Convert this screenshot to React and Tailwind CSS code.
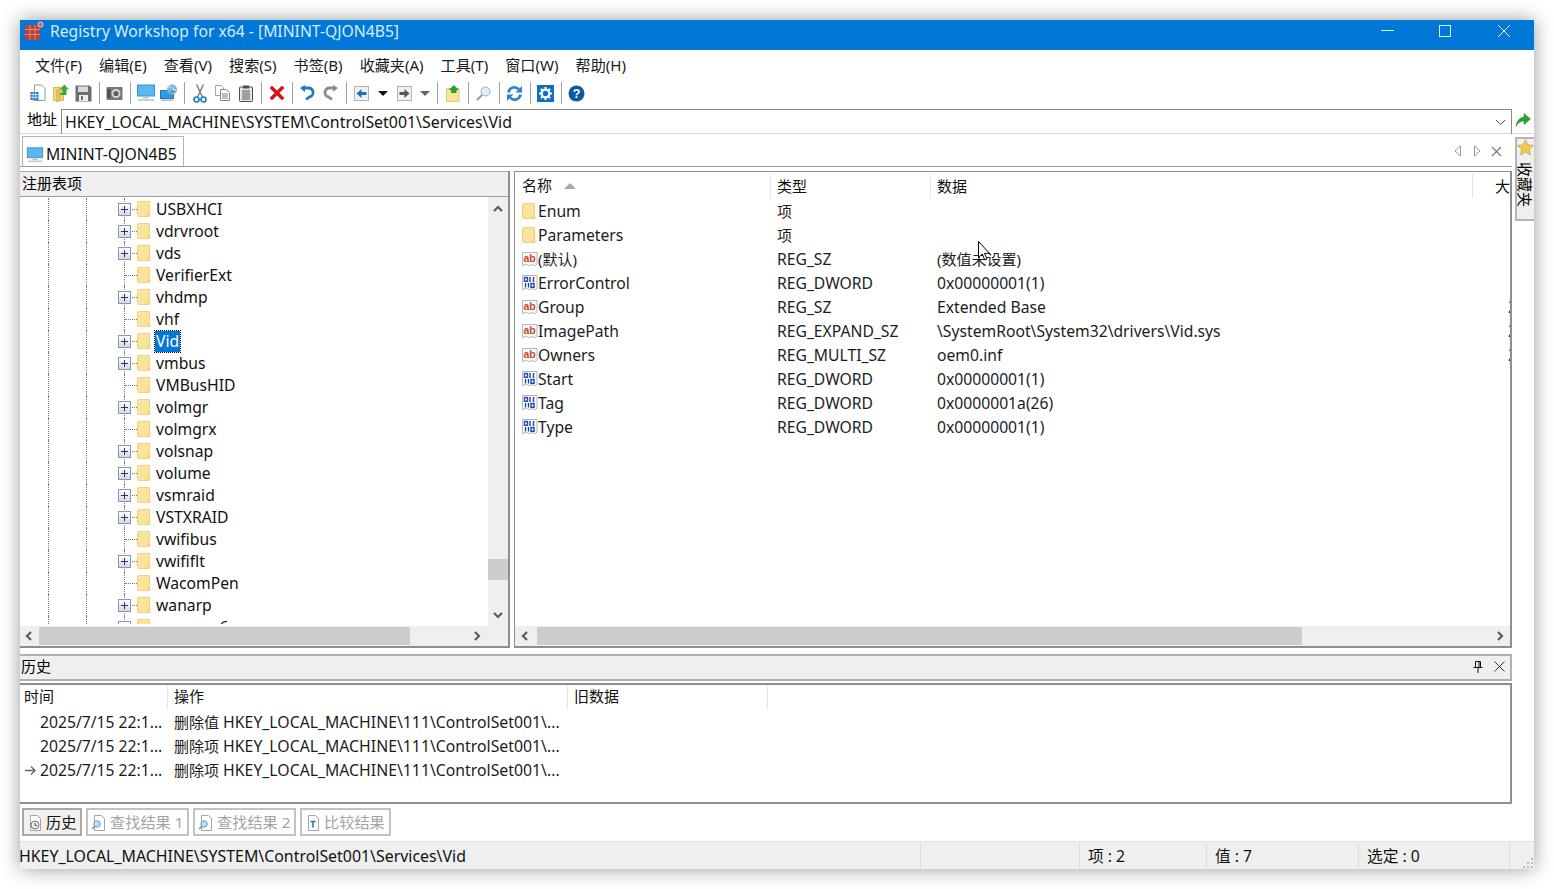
import React from "react";

const treeRows = [
  ["USBXHCI", true],
  ["vdrvroot", true],
  ["vds", true],
  ["VerifierExt", false],
  ["vhdmp", true],
  ["vhf", false],
  ["Vid", true, true],
  ["vmbus", true],
  ["VMBusHID", false],
  ["volmgr", true],
  ["volmgrx", false],
  ["volsnap", true],
  ["volume", true],
  ["vsmraid", true],
  ["VSTXRAID", true],
  ["vwifibus", false],
  ["vwififlt", true],
  ["WacomPen", false],
  ["wanarp", true],
  ["wanarpv6", true],
];

const valueRows = [
  ["folder", "Enum", "项", ""],
  ["folder", "Parameters", "项", ""],
  ["ab", "(默认)", "REG_SZ", "(数值未设置)"],
  ["bin", "ErrorControl", "REG_DWORD", "0x00000001(1)"],
  ["ab", "Group", "REG_SZ", "Extended Base", "2"],
  ["ab", "ImagePath", "REG_EXPAND_SZ", "\\SystemRoot\\System32\\drivers\\Vid.sys", "2"],
  ["ab", "Owners", "REG_MULTI_SZ", "oem0.inf", "2"],
  ["bin", "Start", "REG_DWORD", "0x00000001(1)"],
  ["bin", "Tag", "REG_DWORD", "0x0000001a(26)"],
  ["bin", "Type", "REG_DWORD", "0x00000001(1)"],
];

const historyRows = [
  ["2025/7/15 22:1...", "删除值", false],
  ["2025/7/15 22:1...", "删除项", false],
  ["2025/7/15 22:1...", "删除项", true],
];

// chinese labels sit a bit smaller than the latin text next to them
const cjk = (s) => (/[\u4e00-\u9fff]/.test(s) ? "text-[15px]" : "pt-[2px]");

const Folder = () => (
  <svg width="14" height="17" viewBox="0 0 14 17" className="shrink-0">
    <path d="M.5 1.5a1 1 0 0 1 1-1h11v15h-11a1 1 0 0 1-1-1z" fill="#fbe39a" stroke="#f0d27c" />
    <path d="M10.5 11.5h3v4h-3z" fill="#f5d785" />
  </svg>
);

const AbIcon = () => (
  <svg width="16" height="16" viewBox="0 0 16 16" className="shrink-0">
    <path d="M.5 1.5h14.500v11.500l-1.500 1.500-3-1-3 1-3-1-4 1z" fill="#fff" stroke="#b4b4b4" />
    <text x="1.500" y="10.500" fontSize="10.500" fontWeight="700" fontFamily="Liberation Sans" fill="#c8452a">ab</text>
  </svg>
);

const BinIcon = () => (
  <svg width="16" height="16" viewBox="0 0 16 16" className="shrink-0">
    <path d="M.5 .5h14.500v12.500l-1.500 1.500-3-1-3 1-3-1-4 1z" fill="#fff" stroke="#b4b4b4" />
    <g fill="none" stroke="#1a46a8" strokeWidth="1.400">
      <rect x="2.500" y="2.500" width="3" height="3.800" />
      <path d="M8 2v5M11.500 2v5" />
      <path d="M3.500 8v4.500M6.500 8v4.500" />
      <rect x="9" y="8.500" width="3" height="3.800" />
    </g>
  </svg>
);

const Monitor = ({ size = 20 }) => (
  <svg width={size} height={size} viewBox="0 0 20 20">
    <rect x="1.500" y="2" width="17" height="11" fill="#5cb8ec" stroke="#3a93cd" />
    <path d="M7 14h6v1.500H7z" fill="#b9c4cc" />
    <path d="M2 16h16v2H2z" fill="#c5d0d8" />
  </svg>
);

const Tool = ({ children }) => (
  <button className="w-[23px] h-[24px] flex items-center justify-center shrink-0">{children}</button>
);

const Sep = () => (
  <div className="w-[8px] h-[22px] flex justify-center shrink-0">
    <div className="w-px h-full bg-[#a0a0a0]" />
  </div>
);

const Caret = ({ w, color = "#111" }) => (
  <div className="h-[24px] flex items-center justify-center shrink-0" style={{ width: w }}>
    <div
      className="w-0 h-0 border-x-[5px] border-x-transparent border-t-[5px]"
      style={{ borderTopColor: color }}
    />
  </div>
);

function Toolbar() {
  return (
    <div className="h-[28px] flex items-center pl-[6px] pb-[2px] shrink-0">
      <Tool>
        <svg width="16" height="18" viewBox="0 0 16 18">
          <path d="M4.500 1h7l3.500 3.500V16.500h-11z" fill="#fff" stroke="#8d98a0" />
          <path d="M.5 8h8v8h-8z" fill="#1a78cc" />
          <path d="M1 10.500h7M1 13.300h7M3.200 8.500v7M5.800 8.500v7" stroke="#d2e8f8" strokeWidth=".9" />
        </svg>
      </Tool>
      <Tool>
        <svg width="18" height="19" viewBox="0 0 18 19">
          <path d="M1.500 3.500h10v13h-10z" fill="#f5d67f" stroke="#d8b65f" />
          <path d="M4 5.500l5-2v13.500L4 18.500z" fill="#e5bb5d" />
          <path d="M8 9h2.500V5.500H8l4.300-5L17 5.500h-2.500v5.500H8z" fill="#39a83a" />
        </svg>
      </Tool>
      <Tool>
        <svg width="17" height="17" viewBox="0 0 17 17">
          <path d="M.5.500h14l2 2v14H.5z" fill="#6e6e6e" />
          <path d="M3 1.500h10V7H3z" fill="#d9d9d9" />
          <path d="M4 10h9v6H4z" fill="#ededed" />
          <path d="M6 11h2v4H6z" fill="#6e6e6e" />
        </svg>
      </Tool>
      <Sep />
      <Tool>
        <svg width="17" height="15" viewBox="0 0 17 15">
          <rect x=".500" y="1" width="16" height="13" rx="1" fill="#77787a" />
          <rect x="1" y="3" width="3.500" height="9" fill="#4f5052" />
          <circle cx="10" cy="7.500" r="4.500" fill="#d8d8d8" />
          <circle cx="10" cy="7.500" r="2.600" fill="#4e6366" />
        </svg>
      </Tool>
      <Sep />
      <Tool>
        <Monitor />
      </Tool>
      <Tool>
        <svg width="18" height="18" viewBox="0 0 18 18">
          <rect x=".500" y="6.500" width="13" height="8" fill="#2f9be0" stroke="#2078b5" />
          <path d="M1 15.500h12v1.500H1z" fill="#aeb9c2" />
          <circle cx="12" cy="5.500" r="5" fill="#7fb4dc" />
          <path d="M8 3.500c2-2 4 0 5 1.500s3 .5 3 .5" stroke="#e9f3fa" fill="none" />
          <path d="M10 9c1-2 3-2 5-1" stroke="#3878ab" fill="none" />
        </svg>
      </Tool>
      <Sep />
      <Tool>
        <svg width="14" height="19" viewBox="0 0 14 19">
          <path d="M3.500 .500l6 12.500M10.500 .500L4.500 13" stroke="#7e7e7e" strokeWidth="1.500" />
          <circle cx="3.500" cy="15.500" r="2.500" fill="#fff" stroke="#1e7cc4" strokeWidth="1.700" />
          <circle cx="10.500" cy="15.500" r="2.500" fill="#fff" stroke="#1e7cc4" strokeWidth="1.700" />
        </svg>
      </Tool>
      <Tool>
        <svg width="15" height="16" viewBox="0 0 15 16">
          <path d="M.500.500h6l2 2v8h-8z" fill="#fff" stroke="#a4a4a4" />
          <path d="M5.500 4.500h6l3 3v8h-9z" fill="#fff" stroke="#8a8a8a" />
          <path d="M7 9h6M7 11h6M7 13h6" stroke="#4a8fc4" />
        </svg>
      </Tool>
      <Tool>
        <svg width="14" height="17" viewBox="0 0 14 17">
          <rect x=".500" y="2" width="13" height="14.500" rx="1" fill="#e6e6e6" stroke="#4c4c4c" />
          <rect x="4" y=".500" width="6" height="3" fill="#4c4c4c" />
          <path d="M3 6h8M3 8h8M3 10h8M3 12h8M3 14h8" stroke="#5a5a5a" />
        </svg>
      </Tool>
      <Sep />
      <Tool>
        <svg width="14" height="14" viewBox="0 0 14 14">
          <path d="M2 2l10 10M12 2L2 12" stroke="#d7141a" strokeWidth="3.400" strokeLinecap="square" />
        </svg>
      </Tool>
      <Sep />
      <Tool>
        <svg width="15" height="16" viewBox="0 0 15 16">
          <path d="M3 3h5.500a4.500 4.500 0 0 1 1 8.900L6 14.500" fill="none" stroke="#1e78c6" strokeWidth="2.800" />
          <path d="M0 3l5-3v7z" fill="#1e78c6" />
        </svg>
      </Tool>
      <Tool>
        <svg width="15" height="16" viewBox="0 0 15 16">
          <path d="M12 3H6.500a4.500 4.500 0 0 0-1 8.900L9 14.500" fill="none" stroke="#8b8b8b" strokeWidth="2.800" />
          <path d="M15 3l-5-3v7z" fill="#8b8b8b" />
        </svg>
      </Tool>
      <Sep />
      <Tool>
        <svg width="15" height="15" viewBox="0 0 15 15">
          <rect x=".500" y=".500" width="14" height="14" fill="#f0f0f0" stroke="#b4b4b4" />
          <path d="M2.500 7.500L7.500 3v3h5v3h-5v3z" fill="#1e6fc0" />
        </svg>
      </Tool>
      <Caret w={20} />
      <Tool>
        <svg width="15" height="15" viewBox="0 0 15 15">
          <rect x=".500" y=".500" width="14" height="14" fill="#f0f0f0" stroke="#b4b4b4" />
          <path d="M12.500 7.500L7.500 3v3h-5v3h5v3z" fill="#555" />
        </svg>
      </Tool>
      <Caret w={17} color="#666" />
      <Sep />
      <Tool>
        <svg width="14" height="17" viewBox="0 0 14 17">
          <path d="M.500 3.500h12.500v13H.500z" fill="#fbe39a" stroke="#e5c76f" />
          <path d="M5 8V5H2.500L8 0l5 5h-2.500v3z" fill="#27a32c" />
        </svg>
      </Tool>
      <Sep />
      <Tool>
        <svg width="15" height="15" viewBox="0 0 15 15">
          <circle cx="9.500" cy="5.500" r="4.500" fill="#e3eef6" stroke="#8fb0c8" />
          <path d="M6 9l-5 5" stroke="#9a9a9a" strokeWidth="2" />
        </svg>
      </Tool>
      <Sep />
      <Tool>
        <svg width="15" height="15" viewBox="0 0 15 15">
          <path d="M1.500 6.500A6 6 0 0 1 12 3.500" fill="none" stroke="#2b83cf" strokeWidth="2.600" />
          <path d="M15 0v6.500H8.500z" fill="#2b83cf" />
          <path d="M13.500 8.500A6 6 0 0 1 3 11.500" fill="none" stroke="#2b83cf" strokeWidth="2.600" />
          <path d="M0 15V8.500h6.500z" fill="#2b83cf" />
        </svg>
      </Tool>
      <Sep />
      <Tool>
        <svg width="17" height="17" viewBox="0 0 17 17">
          <rect width="17" height="17" fill="#0f6fc6" />
          <circle cx="8.500" cy="8.500" r="3.800" fill="none" stroke="#fff" strokeWidth="2.200" />
          <path d="M8.500 2v2.500M8.500 12.500V15M2 8.500h2.500M12.500 8.500H15M3.900 3.900l1.800 1.800M11.300 11.300l1.800 1.800M13.100 3.900l-1.800 1.800M5.700 11.300l-1.800 1.800" stroke="#fff" strokeWidth="2" />
        </svg>
      </Tool>
      <Sep />
      <Tool>
        <svg width="17" height="17" viewBox="0 0 17 17">
          <circle cx="8.500" cy="8.500" r="8" fill="#0b5aa5" />
          <text x="8.500" y="13" textAnchor="middle" fontSize="12.500" fontWeight="700" fontFamily="Liberation Sans" fill="#fff">?</text>
        </svg>
      </Tool>
    </div>
  );
}

const Guide = ({ w }) => (
  <div className="h-full border-r border-dotted border-r-[#777] shrink-0" style={{ width: w }} />
);

function TreeRow({ name, expandable, selected }) {
  return (
    <div className="flex h-[22px] items-center">
      <Guide w={29} />
      <Guide w={38} />
      <div className="relative w-[38px] h-full border-r border-dotted border-r-[#777] shrink-0">
        {expandable && (
          <div className="absolute right-[-7px] top-[5px] w-[13px] h-[13px] border border-[#8a97a8] bg-gradient-to-b from-white to-[#d5d9e2] flex items-center justify-center">
            <div className="relative w-[7px] h-[7px]">
              <div className="absolute left-0 top-[3px] w-[7px] h-px bg-[#1f3a68]" />
              <div className="absolute left-[3px] top-0 w-px h-[7px] bg-[#1f3a68]" />
            </div>
          </div>
        )}
      </div>
      <div className="w-[12px] border-t border-dotted border-t-[#777] shrink-0" />
      <Folder />
      <span
        className={
          selected
            ? "ml-[4px] px-px h-[21px] leading-[20px] text-white bg-[#0078d7] outline-1 outline-dotted outline-black"
            : "ml-[5px] pt-[2px] text-[#111]"
        }
      >
        {name}
      </span>
    </div>
  );
}

const Chevron = ({ d }) => (
  <svg width="12" height="12" viewBox="0 0 12 12">
    <path d={d} fill="none" stroke="#5c5c5c" strokeWidth="2.200" />
  </svg>
);

function HScroll({ left, thumb, after }) {
  return (
    <div className="h-[20px] flex items-stretch bg-[#efefef] shrink-0">
      <div className="flex items-center justify-center pr-[2px] shrink-0" style={{ width: left }}>
        <Chevron d="M8 2L4 6l4 4" />
      </div>
      <div className="bg-[#cdcdcd] my-px shrink-0" style={{ width: thumb }} />
      <div className="flex-1" />
      <div className="flex items-center justify-center shrink-0" style={{ width: after }}>
        <Chevron d="M4 2l4 4-4 4" />
      </div>
    </div>
  );
}

function TreePane() {
  return (
    <div className="w-[490px] shrink-0 h-full border-r-2 border-b-2 border-[#8e8e8e] flex flex-col">
      <div className="h-[26px] bg-[#efefef] border-t border-[#a8a8a8] border-b border-b-[#a0a0a0] pl-[2px] leading-[23px] text-[15px] shrink-0">注册表项</div>
      <div className="flex-1 flex min-h-0">
        <div className="flex-1 overflow-hidden pt-px mb-[2px]">
          {treeRows.map(([name, expandable, selected]) => (
            <TreeRow key={name} name={name} expandable={expandable} selected={selected} />
          ))}
        </div>
        <div className="w-[20px] flex flex-col bg-[#efefef] shrink-0">
          <div className="h-[24px] flex items-center justify-center shrink-0">
            <Chevron d="M2 8l4-4 4 4" />
          </div>
          <div className="h-[338px] shrink-0" />
          <div className="h-[21px] bg-[#cdcdcd] shrink-0" />
          <div className="flex-1 flex items-end justify-center pb-[5px]">
            <Chevron d="M2 4l4 4 4-4" />
          </div>
        </div>
      </div>
      <div className="pr-[20px] bg-[#efefef] shrink-0">
        <HScroll left={19} thumb={371} after={23} />
      </div>
    </div>
  );
}

function ValuesPane() {
  return (
    <div className="flex-1 min-w-0 h-full border border-b-2 border-r-2 border-[#8e8e8e] flex flex-col">
      <div className="h-[27px] flex items-center shrink-0 text-[#111] text-[15px]">
        <div className="w-[256px] pl-[7px] flex items-center gap-[12px] h-[24px] border-r border-[#e5e5e5] shrink-0">
          名称
          <div className="w-0 h-0 border-x-[6px] border-x-transparent border-b-[6px] border-b-[#a8a8a8]" />
        </div>
        <div className="w-[160px] pl-[6px] h-[24px] leading-[24px] border-r border-[#e5e5e5] shrink-0">类型</div>
        <div className="w-[542px] pl-[6px] h-[24px] leading-[24px] border-r border-[#e5e5e5] shrink-0">数据</div>
        <div className="flex-1 pl-[22px] h-[24px] leading-[24px] overflow-hidden whitespace-nowrap">大小</div>
      </div>
      <div className="flex-1 min-h-0 overflow-hidden">
        {valueRows.map(([kind, name, type, data, size]) => (
          <div key={name} className="h-[24px] flex items-center text-[#1c1c1c]">
            <div className="w-[256px] pl-[7px] flex items-center shrink-0">
              <div className="w-[16px] flex items-center justify-start shrink-0">
                {kind === "folder" ? <Folder /> : kind === "ab" ? <AbIcon /> : <BinIcon />}
              </div>
              <span className={cjk(name)}>{name}</span>
            </div>
            <div className={`w-[160px] pl-[6px] shrink-0 ${cjk(type)}`}>{type}</div>
            <div className={`w-[577px] pl-[6px] shrink-0 whitespace-nowrap ${cjk(data)}`}>{data}</div>
            <div className="flex-1 overflow-hidden pt-[2px]">{size}</div>
          </div>
        ))}
      </div>
      <HScroll left={22} thumb={765} after={20} />
    </div>
  );
}

function HistoryPane() {
  return (
    <div className="h-[121px] mt-[2px] border-y-2 border-r-2 border-[#8e8e8e] flex flex-col shrink-0">
      <div className="h-[25px] flex items-start text-[#111] text-[15px] shrink-0">
        <div className="w-[148px] pl-[4px] h-[24px] leading-[22px] border-r border-[#e5e5e5] shrink-0">时间</div>
        <div className="w-[400px] pl-[6px] h-[24px] leading-[22px] border-r border-[#e5e5e5] shrink-0">操作</div>
        <div className="w-[200px] pl-[6px] h-[24px] leading-[22px] border-r border-[#e5e5e5] shrink-0">旧数据</div>
      </div>
      {historyRows.map(([time, op, current], i) => (
        <div key={i} className="h-[24px] flex items-center text-[#1c1c1c]">
          <div className="w-[20px] flex justify-end pr-[3px] shrink-0">
            {current && (
              <svg width="13" height="11" viewBox="0 0 13 11">
                <path d="M1 5.500h10M7 1.500l4 4-4 4" fill="none" stroke="#666" strokeWidth="1.400" />
              </svg>
            )}
          </div>
          <div className="w-[134px] pt-[2px] shrink-0 whitespace-nowrap">{time}</div>
          <div className="pt-[2px] whitespace-nowrap text-[15.8px]">
            <span className="text-[15px]">{op}</span> HKEY_LOCAL_MACHINE\111\ControlSet001\...
          </div>
        </div>
      ))}
    </div>
  );
}

const PageIcon = ({ children }) => (
  <svg width="16" height="17" viewBox="0 0 16 17" className="shrink-0">
    <path d="M3.500 1.500h7l3 3v12h-10z" fill="#fff" stroke="#a5a5a5" />
    {children}
  </svg>
);

function BottomTab({ w, active, icon, children }) {
  return (
    <div
      className={`h-[28px] border-2 flex items-center pl-[3px] gap-[3px] text-[15.2px] shrink-0 ${
        active ? "bg-[#f0f0f0] text-[#111] border-[#a8a8a8]" : "bg-white text-[#a3a3a3] border-[#c2c2c2]"
      }`}
      style={{ width: w }}
    >
      {icon}
      <span className="whitespace-nowrap">{children}</span>
    </div>
  );
}

const Search = (
  <PageIcon>
    <circle cx="6" cy="10" r="3.200" fill="#bfe0f3" stroke="#5b9bc4" />
    <path d="M3.500 12.500L1 15" stroke="#7a8f9c" strokeWidth="1.500" />
  </PageIcon>
);

export default function App() {
  return (
    <div className="w-[1554px] h-[889px] p-[20px] bg-white overflow-hidden font-['Noto_Sans','Noto_Sans_CJK_SC',sans-serif] text-[15.7px]">
      <div className="relative w-[1514px] h-[849px] flex flex-col bg-white shadow-[0_0_18px_rgba(0,0,0,0.4)]">
        {/* title bar */}
        <div className="h-[30px] pb-[8px] bg-[#0078d7] flex items-center text-[#d8ebfa] shrink-0">
          <svg width="20" height="20" viewBox="0 0 20 20" className="ml-[4px] shrink-0">
            <path d="M1 4h15v15H1z" fill="#bd4038" />
            <path d="M1 8.500h15M1 13.500h15M6 4v15M11 4v15" stroke="#e29a90" strokeWidth=".8" />
            <circle cx="16.500" cy="3.500" r="2.500" fill="#e44a4a" stroke="#fff" strokeWidth=".8" />
          </svg>
          <span className="ml-[6px] pt-[2px]">Registry Workshop for x64 - [MININT-QJON4B5]</span>
          <div className="ml-auto flex items-center h-full">
            <div className="w-[58px] flex justify-center">
              <svg width="13" height="12" viewBox="0 0 13 12"><path d="M0 5.500h13" stroke="#e8f3fc" /></svg>
            </div>
            <div className="w-[58px] flex justify-center">
              <svg width="12" height="12" viewBox="0 0 12 12"><rect x=".500" y=".500" width="11" height="11" fill="none" stroke="#e8f3fc" /></svg>
            </div>
            <div className="w-[60px] pr-[1px] flex justify-center">
              <svg width="12" height="12" viewBox="0 0 12 12"><path d="M0 0l12 12M12 0L0 12" stroke="#e8f3fc" /></svg>
            </div>
          </div>
        </div>

        {/* menu */}
        <div className="h-[30px] pl-[15px] flex items-center gap-[17px] text-[15.1px] text-[#1a1a1a] shrink-0">
          {["文件(F)", "编辑(E)", "查看(V)", "搜索(S)", "书签(B)", "收藏夹(A)", "工具(T)", "窗口(W)", "帮助(H)"].map((m) => (
            <span key={m}>{m}</span>
          ))}
        </div>

        <Toolbar />

        {/* address bar */}
        <div className="h-[26px] flex items-start border-b border-[#d8d8d8] shrink-0">
          <div className="w-[41px] pl-[7px] pt-px leading-[21px] text-[15px] shrink-0">地址</div>
          <div className="flex-1 h-[25px] border-t border-x border-[#8a8a8a] flex items-center pl-[3px] text-[15.9px] text-[#111] mt-[1px]">
            <span className="pt-[2px]">HKEY_LOCAL_MACHINE\SYSTEM\ControlSet001\Services\Vid</span>
            <svg width="11" height="7" viewBox="0 0 11 7" className="ml-auto mr-[5px]">
              <path d="M1 1l4.500 4.500L10 1" fill="none" stroke="#555" />
            </svg>
          </div>
          <div className="w-[22px] h-[24px] flex items-center justify-center shrink-0">
            <svg width="16" height="14" viewBox="0 0 16 14" className="mr-[1px]">
              <path d="M1 13.500C1.500 7.500 5.500 4 9 4V.500L15.500 6 9 11.500V8C6 8 3 9.500 1 13.500z" fill="#2aa22f" stroke="#1f8a26" strokeWidth=".5" />
            </svg>
          </div>
        </div>

        {/* main area, docked favourites tab on the right */}
        <div className="flex-1 min-h-0 flex">
          <div className="w-[1492px] flex flex-col shrink-0">
            <div className="h-[33px] flex items-end pl-[2px] border-b border-[#9a9a9a] shrink-0">
              <div className="h-[30px] w-[162px] pt-[7px] border border-b-0 border-[#b5b5b5] flex items-center pl-[3px] gap-[2px] text-[#111]">
                <Monitor size={18} />
                MININT-QJON4B5
              </div>
              <div className="ml-auto flex items-center gap-[10px] h-[30px] pr-[10px]">
                <svg width="8" height="12" viewBox="0 0 8 12"><path d="M6.500 1L1 6l5.500 5z" fill="none" stroke="#9a9a9a" /></svg>
                <svg width="8" height="12" viewBox="0 0 8 12" className="ml-[1px]"><path d="M1.500 1L7 6l-5.500 5z" fill="none" stroke="#9a9a9a" /></svg>
                <svg width="11" height="11" viewBox="0 0 11 11"><path d="M1 1l9 9M10 1l-9 9" stroke="#7a7a7a" strokeWidth="1.200" /></svg>
              </div>
            </div>

            <div className="h-[477px] mt-[4px] flex gap-[4px] shrink-0">
              <TreePane />
              <ValuesPane />
            </div>

            <div className="h-[27px] mt-[6px] pb-[2px] bg-[#efefef] border-y-2 border-r-2 border-[#b0b0b0] flex items-center pl-px text-[15px] shrink-0">
              历史
              <svg width="10" height="12" viewBox="0 0 10 12" className="ml-auto mr-[11px]">
                <path d="M2.500.500h5v6h-5zM.500 6.500h9M5 6.500V12M6 1v5" fill="none" stroke="#111" />
              </svg>
              <svg width="11" height="11" viewBox="0 0 11 11" className="mr-[5px]">
                <path d="M.500.500l10 10M10.500.500l-10 10" stroke="#333" />
              </svg>
            </div>

            <HistoryPane />
          </div>

          <div className="w-[19px] h-[84px] mt-[3px] ml-[3px] bg-[#efefef] border-t-2 border-l-2 border-b-2 border-[#b5b5b5] flex flex-col items-start overflow-hidden shrink-0">
            <svg width="17" height="17" viewBox="0 0 24 24">
              <path d="M12 1l3.400 7.300 7.900.900-5.900 5.400 1.600 7.900L12 18.500l-7 4 1.600-7.900L.7 9.200l7.900-.9z" fill="#f6c93e" stroke="#a8a17a" />
            </svg>
            <span className="[writing-mode:vertical-rl] [text-orientation:sideways] mt-[6px] text-[15px] leading-[15px] whitespace-nowrap">收藏夹</span>
          </div>
        </div>

        {/* bottom tabs */}
        <div className="h-[33px] pl-[2px] flex gap-[4px] shrink-0 mt-[4px] mr-[23px]">
          <BottomTab
            w={60}
            active
            icon={
              <PageIcon>
                <circle cx="8" cy="11" r="4" fill="#eee" stroke="#777" />
                <path d="M8 9v2.500h2" stroke="#555" fill="none" />
              </PageIcon>
            }
          >
            历史
          </BottomTab>
          <BottomTab w={103} icon={Search}>查找结果 1</BottomTab>
          <BottomTab w={103} icon={Search}>查找结果 2</BottomTab>
          <BottomTab
            w={91}
            icon={
              <PageIcon>
                <path d="M5.500 7.500h5M8 7.500v6" stroke="#1e78a8" strokeWidth="1.500" />
              </PageIcon>
            }
          >
            比较结果
          </BottomTab>
        </div>

        {/* status bar */}
        <div className="h-[28px] pt-px bg-[#efefef] flex items-center text-[#111] shrink-0 border-t border-[#e2e2e2]">
          <div className="w-[902px] -ml-px pt-[2px] text-[15.9px] whitespace-nowrap h-full flex items-center border-r border-[#dcdcdc] shrink-0">
            HKEY_LOCAL_MACHINE\SYSTEM\ControlSet001\Services\Vid
          </div>
          <div className="w-[159px] h-full border-r border-[#dcdcdc] shrink-0" />
          <div className="w-[127px] pl-[8px] pt-[2px] h-full flex items-center border-r border-[#dcdcdc] shrink-0">项 : 2</div>
          <div className="w-[152px] pl-[8px] pt-[2px] h-full flex items-center border-r border-[#dcdcdc] shrink-0">值 : 7</div>
          <div className="w-[151px] pl-[8px] pt-[2px] h-full flex items-center border-r border-[#dcdcdc] shrink-0">选定 : 0</div>
          <svg width="12" height="12" viewBox="0 0 12 12" className="ml-auto mt-auto mb-[1px]">
            <path d="M9 2h2v2H9zM5 6h2v2H5zM9 6h2v2H9zM1 10h2v2H1zM5 10h2v2H5zM9 10h2v2H9z" fill="#bcbcbc" />
          </svg>
        </div>

        {/* mouse pointer caught in the screenshot */}
        <svg width="13" height="20" viewBox="0 0 13 20" className="absolute left-[958px] top-[221px]">
          <path d="M.500.500v16l3.800-3.500 2.500 6 2.200-1-2.500-5.700h5z" fill="#fff" stroke="#000" />
        </svg>
      </div>
    </div>
  );
}
